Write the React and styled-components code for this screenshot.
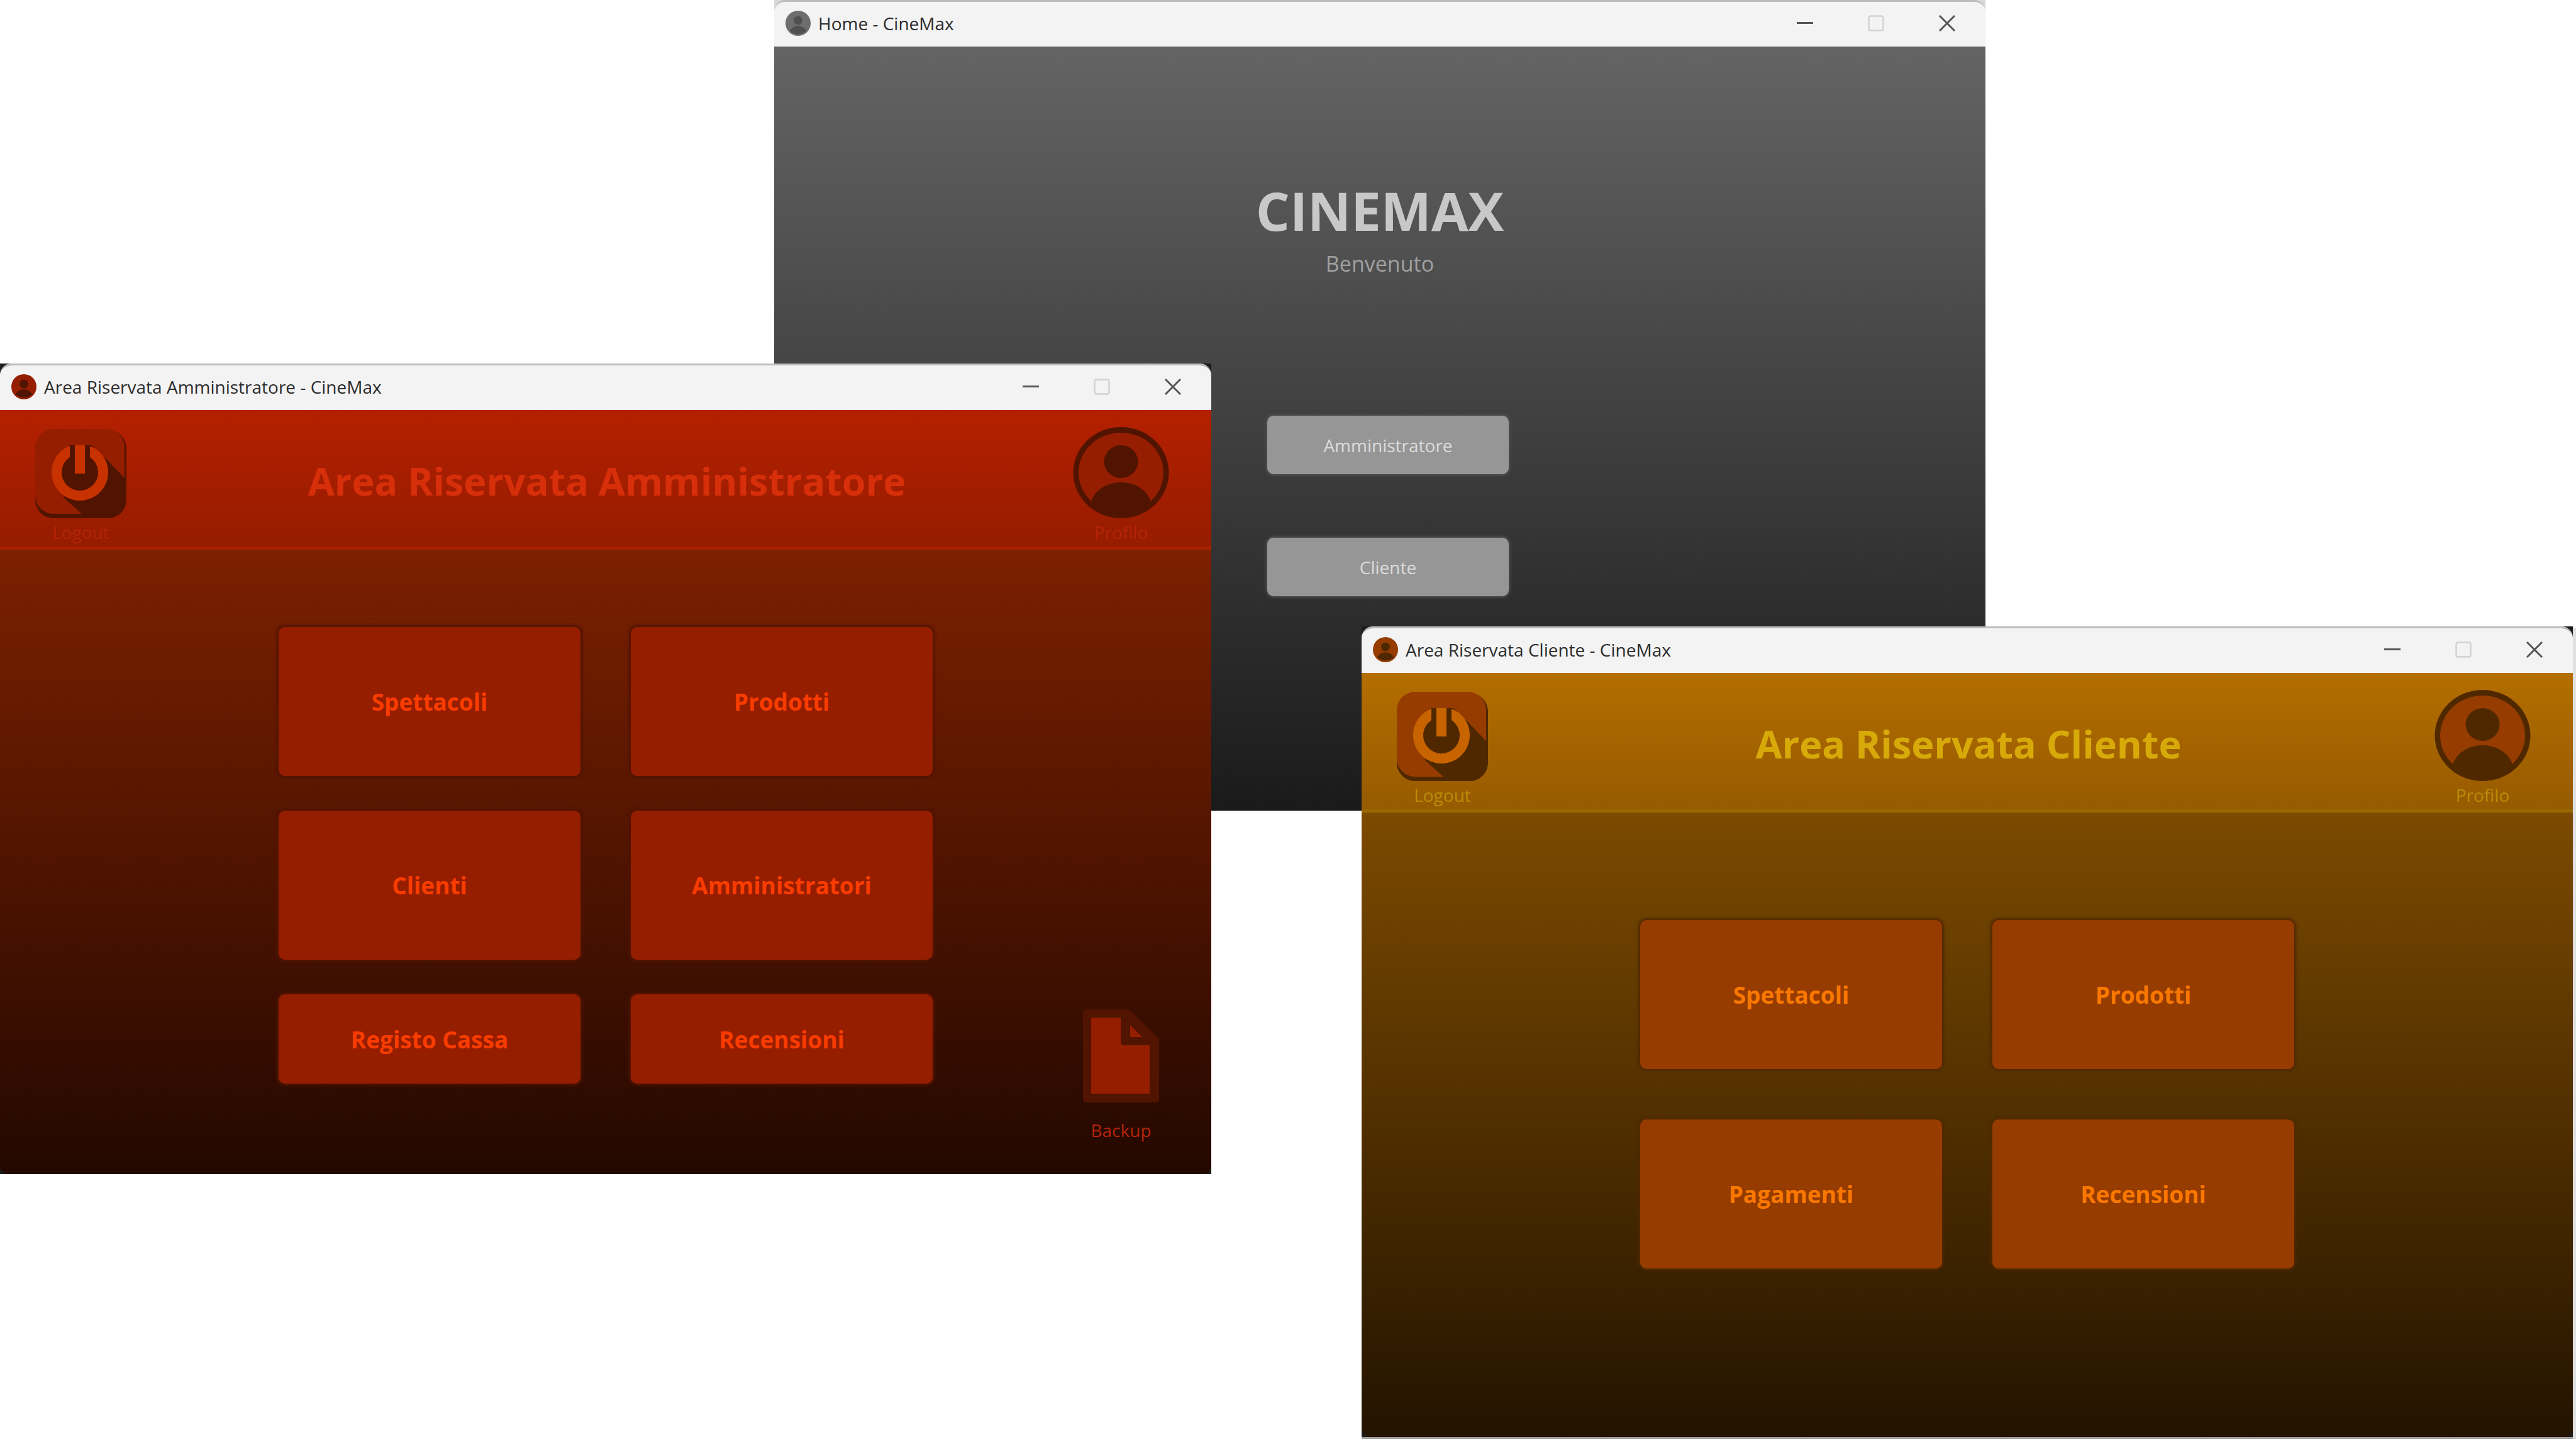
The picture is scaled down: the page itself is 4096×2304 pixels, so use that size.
import React from "react";
import styled, { createGlobalStyle, ThemeProvider } from "styled-components";

const GlobalStyle = createGlobalStyle`
  *, *::before, *::after { box-sizing: border-box; }
  html, body, #root { height: 100%; }
  body {
    margin: 0;
    background: #ffffff;
    font-family: "Open Sans", "Noto Sans", sans-serif;
    overflow: hidden;
  }
  button {
    font: inherit;
    color: inherit;
    border: 0;
    padding: 0;
    background: none;
    cursor: pointer;
  }
  h1, p { margin: 0; }
  svg { display: block; }
`;

const grey = {
  frame: "#d9d9d9",
  edge: "none",
  bodyTop: "#646464",
  bodyBottom: "#1a1a1a",
  tile: "#969696",
  tileText: "#dcdcdc",
  dark: "#505050",
  avatar: "#6e6e6e",
  title: "#c8c8c8",
  label: "#a0a0a0",
};

const red = {
  frame: "#1c1c1c",
  edge: "none",
  headTop: "#b42000",
  headBottom: "#961c00",
  line: "#a82200",
  bodyTop: "#7c2000",
  bodyBottom: "#230800",
  tile: "#961e00",
  tileText: "#fa3c00",
  dark: "#501400",
  avatar: "#961e00",
  ring: "#c83200",
  title: "#d72f0a",
  label: "#b42408",
};

const amber = {
  frame: "#1c1c1c",
  edge: "0 3px #a4a09c, 6px 3px #e0e0e0",
  headTop: "#b46e00",
  headBottom: "#965a00",
  line: "#966a00",
  bodyTop: "#7c4a00",
  bodyBottom: "#231300",
  tile: "#963c00",
  tileText: "#fa7800",
  dark: "#502800",
  avatar: "#963c00",
  ring: "#c86400",
  title: "#d7aa0a",
  label: "#b98c08",
};

const Desktop = styled.main`
  position: relative;
  width: 100%;
  height: 100%;
  overflow: hidden;
`;

const Frame = styled.section`
  position: absolute;
  left: ${(p) => p.$x}px;
  top: ${(p) => p.$y}px;
  width: 1926px;
  height: 1289px;
  background: ${(p) => p.theme.frame};
  box-shadow: ${(p) => p.theme.edge};
`;

const Surface = styled.div`
  display: flex;
  flex-direction: column;
  height: 100%;
  border-top: 3px solid #bcbcbc;
  border-radius: 18px 18px 14px 14px;
  overflow: hidden;
`;

const TitleBar = styled.header`
  display: flex;
  align-items: center;
  flex: none;
  height: 71px;
  padding: 0 5px 4px 18px;
  background: #f3f3f3;
  color: #2b2b2b;
`;

const WindowName = styled.span`
  flex: 1;
  margin-left: 12px;
  font-size: 28px;
  line-height: 40px;
`;

const Control = styled.button`
  display: flex;
  justify-content: center;
  align-items: center;
  width: 113px;
  height: 64px;
  color: ${(p) => (p.disabled ? "#d2d2d2" : "#555555")};
`;

const Header = styled.div`
  display: grid;
  grid-template-columns: 1fr auto 1fr;
  flex: none;
  height: 222px;
  padding: 27px 52px 0;
  border-bottom: 5px solid ${(p) => p.theme.line};
  background: linear-gradient(${(p) => p.theme.headTop}, ${(p) => p.theme.headBottom});
`;

const Heading = styled.h1`
  align-self: start;
  margin-top: 38px;
  padding-left: 4px;
  font-size: 61px;
  line-height: 96px;
  font-weight: 700;
  white-space: nowrap;
  color: ${(p) => p.theme.title};
`;

const IconAction = styled.button`
  display: flex;
  flex-direction: column;
  align-items: center;
  justify-self: ${(p) => (p.$end ? "end" : "start")};
  align-self: ${(p) => (p.$low ? "end" : "start")};
  gap: ${(p) => (p.$low ? 24 : 2)}px;
  width: 153px;
  margin-right: ${(p) => (p.$end ? 15 : 0)}px;
  font-size: 28px;
  line-height: 40px;
  color: ${(p) => p.theme.label};
`;

const Body = styled.div`
  display: grid;
  grid-template-columns: 1fr auto 1fr;
  flex: 1;
  padding: ${(p) => p.$top}px 52px 50px;
  background: linear-gradient(${(p) => p.theme.bodyTop}, ${(p) => p.theme.bodyBottom});
`;

const Menu = styled.nav`
  grid-column: 2;
  display: grid;
  align-content: start;
  grid-template-columns: 480px 480px;
  gap: ${(p) => p.$gap}px 80px;
`;

const Tile = styled.button`
  height: ${(p) => (p.$short ? 142 : 237)}px;
  border-radius: 10px;
  background: ${(p) => p.theme.tile};
  box-shadow: 0 0 4px 3px ${(p) => p.theme.dark};
  color: ${(p) => p.theme.tileText};
  font-size: 37px;
  font-weight: 700;
`;

const Welcome = styled.div`
  display: flex;
  flex-direction: column;
  align-items: center;
  flex: 1;
  padding-top: 200px;
  background: linear-gradient(${(p) => p.theme.bodyTop}, ${(p) => p.theme.bodyBottom});
`;

const Brand = styled.h1`
  font-size: 85px;
  line-height: 120px;
  font-weight: 700;
  color: ${(p) => p.theme.title};
`;

const Greeting = styled.p`
  font-size: 34px;
  line-height: 50px;
  color: ${(p) => p.theme.label};
`;

const Choices = styled.div`
  display: flex;
  flex-direction: column;
  gap: 101px;
  margin-top: 217px;
  padding-left: 26px;
`;

const Choice = styled.button`
  width: 384px;
  height: 93px;
  border-radius: 10px;
  background: ${(p) => p.theme.tile};
  box-shadow: 0 0 4px 2px ${(p) => p.theme.dark};
  color: ${(p) => p.theme.tileText};
  font-size: 28px;
`;

const AppIcon = ({ palette }) => (
  <svg width="40" height="40" viewBox="0 0 40 40" aria-hidden="true">
    <circle cx="20" cy="20" r="20" fill={palette.avatar} />
    <circle cx="20" cy="15.500" r="7" fill={palette.dark} />
    <path d="M7 32a13.500 10.500 0 0 1 26 0a18 18 0 0 1-26 0z" fill={palette.dark} />
  </svg>
);

const Minimise = () => (
  <svg width="26" height="26" viewBox="0 0 26 26" aria-hidden="true">
    <path d="M0 12.500h26" stroke="currentColor" strokeWidth="3" />
  </svg>
);

const Maximise = () => (
  <svg width="26" height="26" viewBox="0 0 26 26" aria-hidden="true">
    <rect x="1.500" y="1.500" width="23" height="23" rx="3" fill="none" stroke="currentColor" strokeWidth="2.500" />
  </svg>
);

const Close = () => (
  <svg width="26" height="26" viewBox="0 0 26 26" aria-hidden="true">
    <path d="M1 1l24 24M25 1L1 25" stroke="currentColor" strokeWidth="3" />
  </svg>
);

const PowerIcon = ({ palette }) => (
  <svg width="145" height="145" viewBox="0 0 145 145" aria-hidden="true">
    <rect x="0" y="5" width="145" height="140" rx="29" fill={palette.dark} />
    <rect x="0" y="3" width="142" height="135" rx="29" fill={palette.tile} />
    <path d="M54 29L90 29L115 53L142 81V111A29 29 0 0 1 113 140H76L45 112L40 70z" fill={palette.dark} />
    <path
      d="M55 30A45 45 0 1 0 87 30V48A29 29 0 1 1 55 48z"
      fill={palette.ring}
    />
    <rect x="63" y="29" width="16" height="45" fill={palette.ring} />
  </svg>
);

const ProfileIcon = ({ palette }) => (
  <svg width="153" height="145" viewBox="0 0 153 145" aria-hidden="true">
    <ellipse cx="76.500" cy="72.500" rx="76" ry="72.500" fill={palette.dark} />
    <ellipse cx="76.500" cy="72.500" rx="67.500" ry="63.500" fill={palette.avatar} />
    <ellipse cx="76.500" cy="55" rx="27" ry="26" fill={palette.dark} />
    <path d="M29 118C36 99 55 88 76.500 88S117 99 124 118C112 130 95 138 76.500 138S41 130 29 118z" fill={palette.dark} />
  </svg>
);

const FileIcon = ({ palette }) => (
  <svg width="121" height="148" viewBox="0 0 121 148" aria-hidden="true">
    <path d="M5 0H73L121 46V143Q121 148 116 148H5Q0 148 0 143V5Q0 0 5 0z" fill={palette.dark} />
    <path d="M13 13H60V52Q60 57 65 57H106V134H13z" fill={palette.tile} />
    <path d="M75 25V44H94z" fill={palette.tile} />
  </svg>
);

function AppWindow({ theme, x, y, name, children }) {
  return (
    <ThemeProvider theme={theme}>
      <Frame $x={x} $y={y} aria-label={name}>
        <Surface>
          <TitleBar>
            <AppIcon palette={theme} />
            <WindowName>{name}</WindowName>
            <Control aria-label="Riduci a icona"><Minimise /></Control>
            <Control aria-label="Ingrandisci" disabled><Maximise /></Control>
            <Control aria-label="Chiudi"><Close /></Control>
          </TitleBar>
          {children}
        </Surface>
      </Frame>
    </ThemeProvider>
  );
}

function AreaHeader({ title, palette }) {
  return (
    <Header>
      <IconAction><PowerIcon palette={palette} />Logout</IconAction>
      <Heading>{title}</Heading>
      <IconAction $end><ProfileIcon palette={palette} />Profilo</IconAction>
    </Header>
  );
}

export default function App() {
  return (
    <>
      <GlobalStyle />
      <Desktop>
        <AppWindow theme={grey} x={1231} y={0} name="Home - CineMax">
          <Welcome>
            <Brand>CINEMAX</Brand>
            <Greeting>Benvenuto</Greeting>
            <Choices>
              <Choice>Amministratore</Choice>
              <Choice>Cliente</Choice>
            </Choices>
          </Welcome>
        </AppWindow>

        <AppWindow theme={red} x={0} y={578} name="Area Riservata Amministratore - CineMax">
          <AreaHeader title="Area Riservata Amministratore" palette={red} />
          <Body $top={123}>
            <Menu $gap={55}>
              <Tile>Spettacoli</Tile>
              <Tile>Prodotti</Tile>
              <Tile>Clienti</Tile>
              <Tile>Amministratori</Tile>
              <Tile $short>Registo Cassa</Tile>
              <Tile $short>Recensioni</Tile>
            </Menu>
            <IconAction $end $low><FileIcon palette={red} />Backup</IconAction>
          </Body>
        </AppWindow>

        <AppWindow theme={amber} x={2165} y={996} name="Area Riservata Cliente - CineMax">
          <AreaHeader title="Area Riservata Cliente" palette={amber} />
          <Body $top={171}>
            <Menu $gap={80}>
              <Tile>Spettacoli</Tile>
              <Tile>Prodotti</Tile>
              <Tile>Pagamenti</Tile>
              <Tile>Recensioni</Tile>
            </Menu>
          </Body>
        </AppWindow>
      </Desktop>
    </>
  );
}
